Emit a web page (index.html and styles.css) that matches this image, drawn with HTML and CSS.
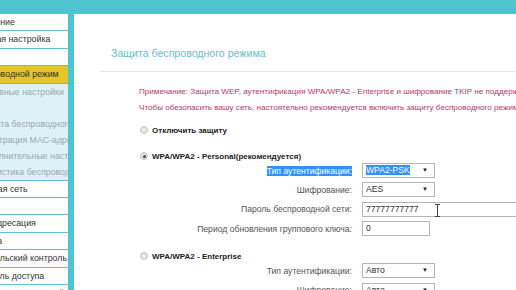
FILE: index.html
```html
<!DOCTYPE html>
<html lang="ru">

<head>
    <meta charset="UTF-8">
    <meta name="viewport" content="width=device-width, initial-scale=1.0">
    <title>Защита беспроводного режима</title>

    <link rel="stylesheet" href="styles.css">
</head>

<body>

    <div class="topbar"></div>

    <div class="layout">
        <nav class="menu">
            <ul>
                <li>Состояние</li>
                <li>Быстрая настройка</li>
                <li>Сеть</li>
                <li class="active">Беспроводной режим</li>
                <li class="submenu">
                    <ul>
                        <li>Основные настройки</li>
                        <li>WPS</li>
                        <li>Защита беспроводного режима</li>
                        <li>Фильтрация MAC-адресов</li>
                        <li>Дополнительные настройки</li>
                        <li>Статистика беспроводного режима</li>
                    </ul>
                </li>
                <li>Гостевая сеть</li>
                <li>DHCP</li>
                <li>Переадресация</li>
                <li>Защита</li>
                <li>Родительский контроль</li>
                <li>Контроль доступа</li>
                <li>Расширенные настройки</li>
            </ul>
        </nav>

        <main class="content">
            <div class="title-bar">
                <h2>Защита беспроводного режима</h2>
            </div>

            <p class="note">Примечание: Защита WEP, аутентификация WPA/WPA2 - Enterprise и шифрование TKIP не поддерживаются</p>
            <p class="note">Чтобы обезопасить вашу сеть, настоятельно рекомендуется включить защиту беспроводного режима</p>

            <div class="option first">
                <span class="radio"></span>
                <span>Отключить защиту</span>
            </div>

            <div class="option">
                <span class="radio checked"></span>
                <span>WPA/WPA2 - Personal(рекомендуется)</span>
            </div>

            <div class="fields">
                <div class="field-row">
                    <label><span class="sel">Тип аутентификации:</span></label>
                    <div class="select"><span class="sel">WPA2-PSK</span><i>▼</i></div>
                </div>
                <div class="field-row">
                    <label>Шифрование:</label>
                    <div class="select"><span>AES</span><i>▼</i></div>
                </div>
                <div class="field-row">
                    <label>Пароль беспроводной сети:</label>
                    <div class="input wide">77777777777<span class="ibeam"></span></div>
                </div>
                <div class="field-row">
                    <label>Период обновления группового ключа:</label>
                    <div class="input short">0</div>
                </div>
            </div>

            <div class="option">
                <span class="radio"></span>
                <span>WPA/WPA2 - Enterprise</span>
            </div>

            <div class="fields">
                <div class="field-row">
                    <label>Тип аутентификации:</label>
                    <div class="select"><span>Авто</span><i>▼</i></div>
                </div>
                <div class="field-row">
                    <label>Шифрование:</label>
                    <div class="select"><span>Авто</span><i>▼</i></div>
                </div>
            </div>
        </main>
    </div>

</body>

</html>
```

FILE: styles.css
```css
body {
    font-family: "Liberation Sans", Arial, sans-serif;
    margin: 0;
    overflow: hidden;
    background-color: #fff;
}

.topbar {
    height: 14px;
    background-color: #4ec4d1;
}

.layout {
    display: flex;
    height: 276px;
}

/* left menu, cut off on both sides like the original crop */
.menu {
    width: 68px;
    flex: none;
    overflow: hidden;
    border-right: 6px solid #4ec4d1;
}

.menu ul {
    list-style: none;
    margin: 0 0 0 -29px;
    padding: 0;
    width: 200px;
}

.menu li {
    height: 16.4px;
    line-height: 16.4px;
    border-bottom: 1px solid #62bfcb;
    font-size: 8.8px;
    color: #333;
    white-space: nowrap;
}

.menu li.active {
    background-color: #e6c622;
}

.menu li.submenu {
    height: auto;
    background-color: #ddf2f6;
}

.menu .submenu ul {
    margin: 0;
    padding-left: 7px;
}

.menu .submenu li {
    height: 16px;
    line-height: 16px;
    border: none;
    color: #9aa6a9;
}

.content {
    flex: 1;
    padding-left: 26px;
    font-size: 8.6px;
    color: #555;
}

.title-bar {
    height: 58px;
    border-bottom: 1px solid #e3e3e3;
    box-sizing: border-box;
}

.title-bar h2 {
    margin: 0;
    padding: 32px 0 0 11px;
    font-size: 10.6px;
    line-height: 14px;
    font-weight: normal;
    color: #62c2cd;
}

.note {
    margin: 0;
    padding-left: 39px;
    font-size: 8.1px;
    line-height: 16px;
    white-space: nowrap;
    color: #b1386c;
}

.note:first-of-type {
    margin-top: 12px;
}

.option {
    display: flex;
    align-items: center;
    gap: 4px;
    height: 16px;
    margin-top: 10px;
    padding-left: 40px;
    font-size: 8px;
    font-weight: bold;
    color: #222;
    white-space: nowrap;
}

.option.first {
    margin-top: 6px;
}

.option:first-of-type + .option {
    margin-top: 11px;
}

.radio {
    width: 8px;
    height: 8px;
    border-radius: 50%;
    border: 1px solid #c4c4c4;
    background: radial-gradient(circle, #f2f2f2, #d6d6d6);
    box-sizing: border-box;
    display: flex;
    align-items: center;
    justify-content: center;
}

.radio.checked::after {
    content: "";
    width: 3px;
    height: 3px;
    border-radius: 50%;
    background-color: #444;
}

.fields {
    margin-top: -3px;
}

.field-row {
    display: grid;
    grid-template-columns: 252px auto;
    column-gap: 10px;
    align-items: center;
    height: 19.3px;
    white-space: nowrap;
}

.field-row label {
    text-align: right;
}

.select,
.input {
    position: relative;
    height: 15px;
    line-height: 13px;
    border: 1px solid #b5b5b5;
    box-sizing: border-box;
    padding-left: 3px;
    color: #333;
    background-color: #fff;
}

.select {
    width: 73px;
}

.select i {
    position: absolute;
    right: 6px;
    top: 0;
    font-style: normal;
    font-size: 6px;
    color: #222;
}

.input.wide {
    width: 170px;
}

.input.short {
    width: 68px;
}

.sel {
    background-color: #3390ff;
    color: #fff;
}

/* text cursor hovering over the password field */
.ibeam {
    position: absolute;
    left: 72px;
    top: 1px;
    width: 5px;
    height: 13px;
    border-top: 1px solid #444;
    border-bottom: 1px solid #444;
    box-sizing: border-box;
}

.ibeam::after {
    content: "";
    position: absolute;
    left: 2px;
    top: 0;
    width: 1px;
    height: 11px;
    background-color: #444;
}
```
